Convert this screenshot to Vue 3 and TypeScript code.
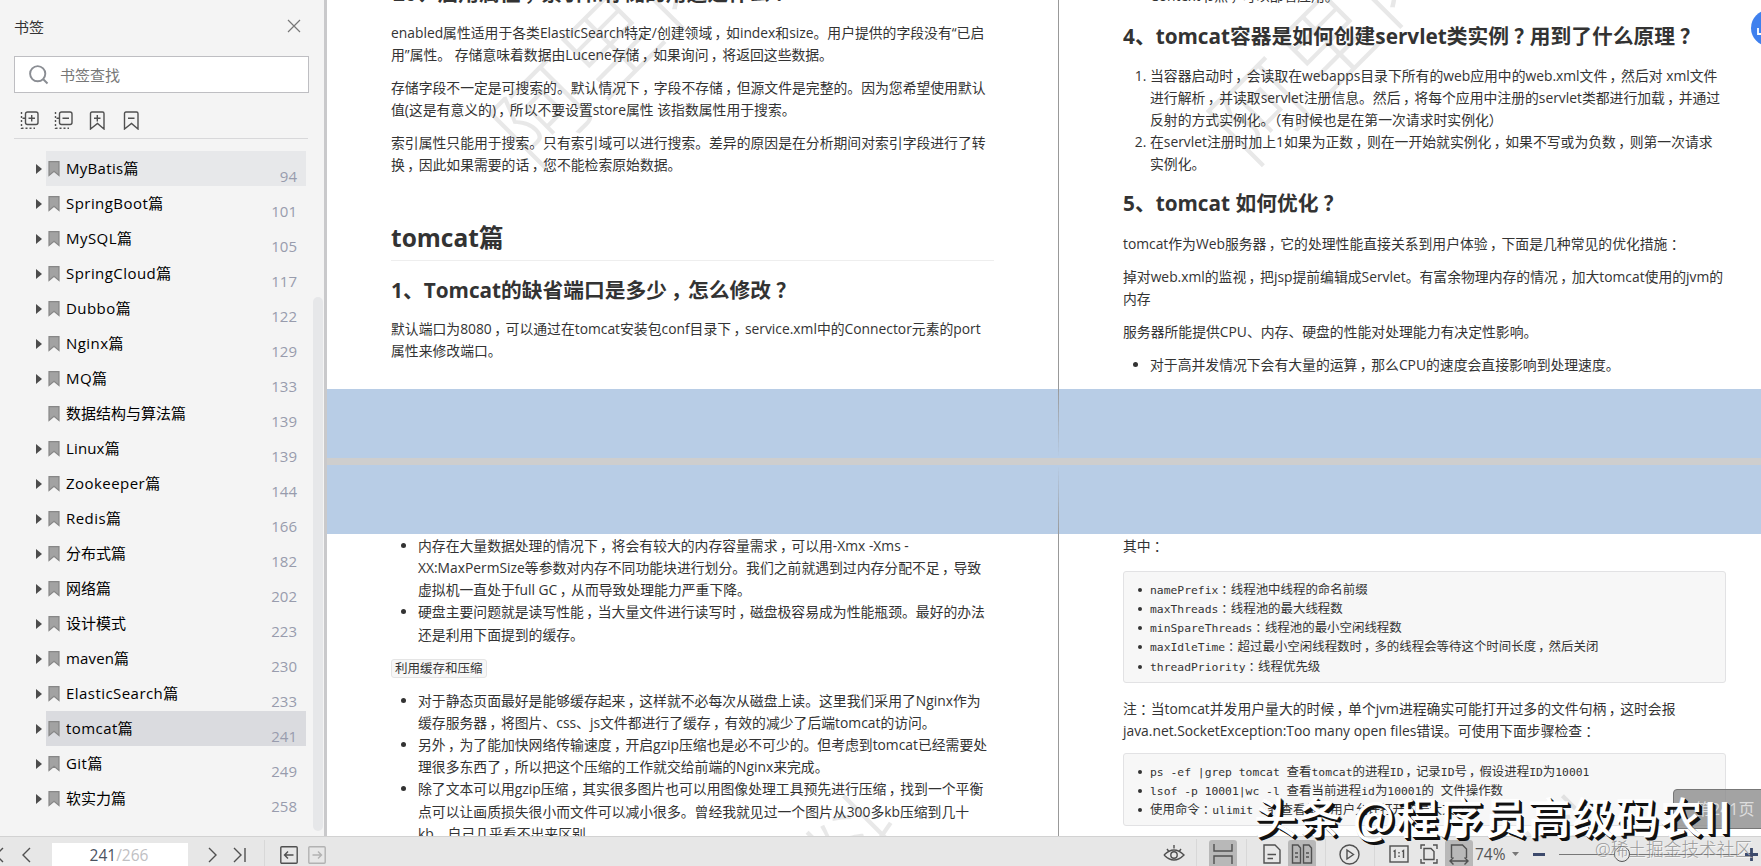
<script setup lang="ts">
import { h } from 'vue'

interface Bookmark { latin?: string; cjk?: string; page: number; leaf?: boolean; state?: string; tight?: boolean }

const bookmarks: Bookmark[] = [
  { latin: 'MyBatis', cjk: '篇', page: 94, state: 'hover' },
  { latin: 'SpringBoot', cjk: '篇', page: 101 },
  { latin: 'MySQL', cjk: '篇', page: 105 },
  { latin: 'SpringCloud', cjk: '篇', page: 117 },
  { latin: 'Dubbo', cjk: '篇', page: 122 },
  { latin: 'Nginx', cjk: '篇', page: 129 },
  { latin: 'MQ', cjk: '篇', page: 133 },
  { cjk: '数据结构与算法篇', page: 139, leaf: true },
  { latin: 'Linux', cjk: '篇', page: 139, tight: true },
  { latin: 'Zookeeper', cjk: '篇', page: 144 },
  { latin: 'Redis', cjk: '篇', page: 166 },
  { cjk: '分布式篇', page: 182 },
  { cjk: '网络篇', page: 202 },
  { cjk: '设计模式', page: 223 },
  { latin: 'maven', cjk: '篇', page: 230, tight: true },
  { latin: 'ElasticSearch', cjk: '篇', page: 233 },
  { latin: 'tomcat', cjk: '篇', page: 241, state: 'active' },
  { latin: 'Git', cjk: '篇', page: 249 },
  { cjk: '软实力篇', page: 258 },
]

const elasticParas: string[][] = [
  ['enabled属性适用于各类ElasticSearch特定/创建领域，如index和size。用户提供的字段没有“已启', '用”属性。 存储意味着数据由Lucene存储，如果询问，将返回这些数据。'],
  ['存储字段不一定是可搜索的。默认情况下，字段不存储，但源文件是完整的。因为您希望使用默认', '值(这是有意义的)，所以不要设置store属性 该指数属性用于搜索。'],
  ['索引属性只能用于搜索。只有索引域可以进行搜索。差异的原因是在分析期间对索引字段进行了转', '换，因此如果需要的话，您不能检索原始数据。'],
]

const portPara: string[] = ['默认端口为8080，可以通过在tomcat安装包conf目录下，service.xml中的Connector元素的port', '属性来修改端口。']

const tuningParas: string[][] = [
  ['tomcat作为Web服务器，它的处理性能直接关系到用户体验，下面是几种常见的优化措施：'],
  ['掉对web.xml的监视，把jsp提前编辑成Servlet。有富余物理内存的情况，加大tomcat使用的jvm的', '内存'],
  ['服务器所能提供CPU、内存、硬盘的性能对处理能力有决定性影响。'],
]

const filesPara: string[] = ['注：当tomcat并发用户量大的时候，单个jvm进程确实可能打开过多的文件句柄，这时会报', 'java.net.SocketException:Too many open files错误。可使用下面步骤检查：']

const cacheList: string[][] = [
  ['对于静态页面最好是能够缓存起来，这样就不必每次从磁盘上读。这里我们采用了Nginx作为', '缓存服务器，将图片、css、js文件都进行了缓存，有效的减少了后端tomcat的访问。'],
  ['另外，为了能加快网络传输速度，开启gzip压缩也是必不可少的。但考虑到tomcat已经需要处', '理很多东西了，所以把这个压缩的工作就交给前端的Nginx来完成。'],
  ['除了文本可以用gzip压缩，其实很多图片也可以用图像处理工具预先进行压缩，找到一个平衡', '点可以让画质损失很小而文件可以减小很多。曾经我就见过一个图片从300多kb压缩到几十', 'kb，自己几乎看不出来区别。'],
]

const hardwareList: string[][] = [
  ['内存在大量数据处理的情况下，将会有较大的内存容量需求，可以用-Xmx -Xms -', 'XX:MaxPermSize等参数对内存不同功能块进行划分。我们之前就遇到过内存分配不足，导致', '虚拟机一直处于full GC，从而导致处理能力严重下降。'],
  ['硬盘主要问题就是读写性能，当大量文件进行读写时，磁盘极容易成为性能瓶颈。最好的办法', '还是利用下面提到的缓存。'],
]

const servletList: string[][] = [
  ['当容器启动时，会读取在webapps目录下所有的web应用中的web.xml文件，然后对 xml文件', '进行解析，并读取servlet注册信息。然后，将每个应用中注册的servlet类都进行加载，并通过', '反射的方式实例化。（有时候也是在第一次请求时实例化）'],
  ['在servlet注册时加上1如果为正数，则在一开始就实例化，如果不写或为负数，则第一次请求', '实例化。'],
]

const poolCode: string[] = [
  'namePrefix：线程池中线程的命名前缀',
  'maxThreads：线程池的最大线程数',
  'minSpareThreads：线程池的最小空闲线程数',
  'maxIdleTime：超过最小空闲线程数时，多的线程会等待这个时间长度，然后关闭',
  'threadPriority：线程优先级',
]

const shellCode: string[] = [
  'ps -ef |grep tomcat 查看tomcat的进程ID，记录ID号，假设进程ID为10001',
  'lsof -p 10001|wc -l 查看当前进程id为10001的 文件操作数',
  '使用命令：ulimit -a 查看每个用户允许打开的最大文件数',
]

// Full-width punctuation sits in the middle of its cell; Latin runs may get a monospace face.
function inline(text: string, mono: boolean) {
  const parts = text.match(/[，：？]|[\x20-\x7e]+|[^\x20-\x7e，：？]+/g) ?? []
  return parts.map((p) => {
    if (/[，：？]/.test(p)) return h('span', { class: p === '，' ? 'pc' : 'pc-q' }, p)
    if (mono && /^[\x20-\x7e]/.test(p)) return h('span', { class: 'mono' }, p)
    return p
  })
}
const Line = (props: { text: string; mono?: boolean }) => h('div', inline(props.text, !!props.mono))
Line.props = ['text', 'mono']
</script>

<template>
  <div class="app">
    <div class="main">
      <aside class="sidebar">
        <header class="side-head">
          <span>书签</span>
          <svg width="14" height="14" viewBox="0 0 14 14"><path d="M1 1L13 13M13 1L1 13" /></svg>
        </header>
        <div class="search">
          <svg width="20" height="20" viewBox="0 0 20 20"><circle cx="8.7" cy="8.7" r="7.6" /><path d="M14 14L18.5 18.5" /></svg>
          <span>书签查找</span>
        </div>
        <div class="tools">
          <svg width="19" height="19" viewBox="0 0 19 19"><rect x="5.5" y="1" width="12.5" height="12.5" rx="2" /><path d="M8.5 7.3H15M11.7 4V10.5M2.5 7.3H5.5" /><path d="M1.5 1V18M1.5 17.3H15" stroke-dasharray="2 2" /></svg>
          <svg width="19" height="19" viewBox="0 0 19 19"><rect x="5.5" y="1" width="12.5" height="12.5" rx="2" /><path d="M8.5 7.3H15M2.5 7.3H5.5" /><path d="M1.5 1V18M1.5 17.3H15" stroke-dasharray="2 2" /></svg>
          <svg width="19" height="19" viewBox="0 0 19 19"><path d="M4 1H14.500Q16 1 16 2.500V18L9.500 12.500L2.500 18V2.500Q2.500 1 4 1M6 7.300H12.500M9.300 4V10.500" /></svg>
          <svg width="19" height="19" viewBox="0 0 19 19"><path d="M4 1H14.500Q16 1 16 2.500V18L9.500 12.500L2.500 18V2.500Q2.500 1 4 1M6 7.300H12.500" /></svg>
        </div>
        <ul class="tree">
          <li v-for="b in bookmarks" :key="b.page + (b.latin ?? '')">
            <span class="twist"><svg v-if="!b.leaf" width="6" height="10" viewBox="0 0 6 10"><path d="M0 0L6 5L0 10Z" /></svg></span>
            <div class="row" :class="b.state">
              <svg class="mark" width="12" height="16" viewBox="0 0 12 16"><path d="M1 .7H11V14.500L6 10.300L1 14.500Z" /></svg>
              <span class="name"><span v-if="b.latin" :class="b.tight ? 'snug' : 'wide'">{{ b.latin }}</span>{{ b.cjk }}</span>
              <span class="num">{{ b.page }}</span>
            </div>
          </li>
        </ul>
        <div class="scrollbar"></div>
      </aside>

      <section class="viewer">
        <div class="spread upper">
          <article class="page">
            <div class="watermark wm-a">阿里内</div>
            <h2 class="cut"><Line text="20、启用属性，索引和存储的用途是什么？" /></h2>
            <div v-for="(p, i) in elasticParas" :key="i" class="para"><Line v-for="l in p" :key="l" :text="l" /></div>
            <h1>tomcat篇</h1>
            <h2><Line text="1、Tomcat的缺省端口是多少，怎么修改？" /></h2>
            <div class="para"><Line v-for="l in portPara" :key="l" :text="l" /></div>
          </article>
          <article class="page right">
            <div class="watermark wm-b">阿里内</div>
            <div class="para cut-line"><Line text="Context节点，可以部署应用。" /></div>
            <h2><Line text="4、tomcat容器是如何创建servlet类实例？用到了什么原理？" /></h2>
            <ol>
              <li v-for="(item, i) in servletList" :key="i"><Line v-for="l in item" :key="l" :text="l" /></li>
            </ol>
            <h2 class="h5"><Line text="5、tomcat 如何优化？" /></h2>
            <div v-for="(p, i) in tuningParas" :key="i" class="para"><Line v-for="l in p" :key="l" :text="l" /></div>
            <ul><li><Line text="对于高并发情况下会有大量的运算，那么CPU的速度会直接影响到处理速度。" /></li></ul>
          </article>
        </div>
        <div class="spread lower">
          <article class="page">
            <div class="watermark wm-c">料</div>
            <ul class="loose">
              <li v-for="(item, i) in hardwareList" :key="i"><Line v-for="l in item" :key="l" :text="l" /></li>
            </ul>
            <div class="tag-line"><code>利用缓存和压缩</code></div>
            <ul class="loose">
              <li v-for="(item, i) in cacheList" :key="i"><Line v-for="l in item" :key="l" :text="l" /></li>
            </ul>
          </article>
          <article class="page right">
            <div class="para"><Line text="其中：" /></div>
            <div class="code first">
              <div v-for="c in poolCode" :key="c" class="code-line"><Line :text="c" :mono="true" /></div>
            </div>
            <div class="para"><Line v-for="l in filesPara" :key="l" :text="l" /></div>
            <div class="code">
              <div v-for="c in shellCode" :key="c" class="code-line"><Line :text="c" :mono="true" /></div>
            </div>
            <div class="watermark wm-d">料</div>
          </article>
        </div>
        <div class="bubble"><svg width="10" height="14" viewBox="0 0 10 14"><path d="M1 4V10H8" /></svg></div>
        <div class="page-tip">第241页</div>
      </section>
    </div>

    <footer class="bar">
      <div class="nav">
        <svg class="n0" width="12" height="18" viewBox="0 0 12 18"><path d="M9 2L2 9L9 16" /></svg>
        <svg class="n1" width="12" height="18" viewBox="0 0 12 18"><path d="M9 2L2 9L9 16" /></svg>
        <div class="pager"><b>241</b><span>/266</span></div>
        <svg class="n2" width="12" height="18" viewBox="0 0 12 18"><path d="M2 2L9 9L2 16" /></svg>
        <svg class="n3" width="14" height="18" viewBox="0 0 14 18"><path d="M1 2L8 9L1 16M12 2V16" /></svg>
        <i class="sep n4"></i>
        <svg class="n5" width="18" height="18" viewBox="0 0 18 18"><rect x=".8" y=".8" width="16.400" height="16.400" rx="1" /><path d="M13.500 9H4.500M8 5.500L4.500 9L8 12.500" /></svg>
        <svg class="n6" width="18" height="18" viewBox="0 0 18 18"><rect x=".8" y=".8" width="16.400" height="16.400" rx="1" /><path d="M4.500 9H13.500M10 5.500L13.500 9L10 12.500" /></svg>
      </div>
      <div class="modes">
        <svg class="eye" width="22" height="20" viewBox="0 0 22 20"><path d="M1 11Q11 1 21 11Q11 21 1 11M4 5L5.500 7M11 1V4.500M18 5L16.500 7" /><circle cx="11" cy="11" r="3.200" /></svg>
        <i class="sep"></i>
        <div class="btn"><svg width="24" height="22" viewBox="0 0 24 22"><path d="M3 1V8H21V1M3 21V13H21V21" /></svg></div>
        <i class="sep"></i>
        <svg class="doc" width="18" height="20" viewBox="0 0 18 20"><path d="M1 1H12L17 6V19H1ZM4.500 10.500H13M4.500 14.500H10" /></svg>
        <div class="btn"><svg width="22" height="20" viewBox="0 0 22 20"><path d="M1.500 1H7L9.500 4V19H1.500ZM12.500 1H18L20.500 4V19H12.500ZM4 9H7M4 13H7M15 9H18M15 13H18" /></svg></div>
        <i class="sep"></i>
        <svg class="play" width="21" height="21" viewBox="0 0 21 21"><circle cx="10.500" cy="10.500" r="9.500" /><path d="M8 6V15L14.500 10.500Z" /></svg>
        <i class="sep"></i>
        <svg class="ratio" width="20" height="18" viewBox="0 0 20 18"><rect x="1" y="1" width="18" height="16" /><path d="M4.500 6.500L6 5.500V13M13 6.500L14.500 5.500V13M10 7V8.500M10 10.500V12" /></svg>
        <svg class="fit" width="18" height="20" viewBox="0 0 18 20"><path d="M1 5V1H5M13 1H17V5M17 15V19H13M5 19H1V15M4 4.500H11L14 7.500V15.500H4Z" /></svg>
        <div class="btn"><svg width="20" height="22" viewBox="0 0 20 22"><path d="M2.500 15V2H13.500L17.500 6V15M1 18H19M4.500 14.500L1 18L4.500 21.500M15.500 14.500L19 18L15.500 21.500" /></svg></div>
        <span class="zoom">74%</span>
        <svg class="caret" width="7" height="4" viewBox="0 0 7 4"><path d="M0 0H7L3.500 4Z" /></svg>
        <i class="minus"></i>
        <div class="slider"><i></i></div>
        <svg class="plus" width="13" height="13" viewBox="0 0 13 13"><path d="M6.500 0V13M0 6.500H13" /></svg>
      </div>
    </footer>
    <div class="stamp">头条 @程序员高级码农II</div>
    <div class="community">@稀土掘金技术社区</div>
  </div>
</template>

<style>
html, body { overflow: hidden; }
.pc { padding-left: .17em; margin-right: -.17em; }
.pc-q { padding-left: .23em; margin-right: -.23em; }
.mono { font-family: "DejaVu Sans Mono", monospace; font-size: 11.350px; white-space: pre; }
</style>

<style scoped>
* { box-sizing: border-box; }
.app { position: relative; width: 1761px; height: 866px; overflow: hidden; background: #f4f4f4; font-family: "Open Sans", "Noto Sans CJK SC", sans-serif; color: #333; display: flex; flex-direction: column; }
svg { fill: none; stroke: #505050; stroke-width: 1.400; flex: none; display: block; }
ul, ol, h1, h2 { margin: 0; padding: 0; }
.main { display: flex; height: 836px; flex: none; }
.sidebar { position: relative; width: 327px; flex: none; padding: 0 18px 0 14px; border-right: 3px solid #c9c9cb; background: #f4f4f4; overflow: hidden; }
.side-head { height: 56px; padding: 0 5px 4px 0; display: flex; align-items: center; justify-content: space-between; font-size: 15px; }
.side-head svg { stroke: #777; stroke-width: 1.200; }
.search { height: 37px; width: 295px; border: 1px solid #bebec2; background: #fff; display: flex; align-items: center; padding-left: 14px; gap: 11px; font-size: 15px; color: #777; }
.search svg { stroke: #8a8d93; stroke-width: 1.900; }
.tools { width: 294px; height: 46px; border-bottom: 1px solid #d8d8da; display: flex; gap: 15px; padding: 18px 0 0 6px; }
.tree { list-style: none; padding-top: 12px; }
.tree li { display: flex; height: 35px; align-items: center; }
.twist { width: 32px; padding-left: 22px; flex: none; }
.twist svg { fill: #4c4c4c; stroke: none; }
.row { width: 260px; height: 35px; display: flex; align-items: center; padding: 0 9px 2px 2px; font-size: 15px; color: #000; }
.row.hover { background: #e7e8ea; }
.row.active { background: #dadbdf; }
.mark { fill: #a2a2a2; stroke: #878787; stroke-width: 1.200; margin-top: 2px; }
.name { margin-left: 6px; white-space: nowrap; }
.wide { letter-spacing: .45px; }
.snug { letter-spacing: .15px; }
.row.hover .wide { letter-spacing: .3px; }
.num { margin-left: auto; color: #989cad; padding-top: 16px; }
.scrollbar { position: absolute; left: 313px; top: 297px; width: 10px; height: 534px; border-radius: 5px; background: #e6e7e9; }
.viewer { position: relative; flex: 1; overflow: hidden; background: #cecece; }
.spread { display: flex; }
.upper { height: 458px; margin-bottom: 7px; }
.lower { height: 371px; }
.page { position: relative; width: 731px; flex: none; padding-left: 64px; background: #fff; overflow: hidden; font-size: 13.830px; line-height: 22px; white-space: nowrap; }
.page.right { width: 704px; border-left: 1px solid #999; }
.upper .page { border-bottom: 69px solid #b8cde6; }
.lower .page { border-top: 69px solid #b8cde6; padding-top: 1px; }
.page > :not(.watermark) { position: relative; }
.para { margin-bottom: 11px; }
h1 { width: 603px; margin-top: 44px; height: 41px; line-height: 36px; font-size: 24.500px; border-bottom: 1px solid #eee; }
h2 { font-size: 20.750px; line-height: 28px; margin: 15px 0 14.500px; }
h2.cut { margin-top: -21px; margin-left: 2px; }
.cut-line { margin: -15px 0 13px 27px; }
h2.h5 { margin-top: 14px; margin-bottom: 16.500px; }
.page ol { padding-left: 27px; }
.page ul { padding-left: 27px; }
.page ol li { list-style: decimal; }
.loose { line-height: 22.150px; }
.tag-line { margin: 11px 0; }
.tag-line code { font: inherit; font-size: 12.500px; line-height: 17px; display: inline-block; padding: 0 3px; border: 1px solid #e5e5e5; border-radius: 3px; background: #f7f7f7; }
.code { width: 603px; border: 1px solid #e2e2e4; border-radius: 3px; background: #f7f7f7; padding: 8px 0 6px 26px; font-size: 12.450px; line-height: 19.300px; margin-bottom: 15px; }
.code.first { margin-top: 13.500px; height: 112px; }
.code-line { position: relative; height: 19.300px; }
.code-line::before { content: ""; position: absolute; left: -12px; top: 8px; width: 4px; height: 4px; border-radius: 50%; background: #333; }
.watermark { position: absolute; font-size: 92px; line-height: 100px; letter-spacing: 5px; font-weight: 300; color: rgba(120, 120, 120, .17); transform: rotate(-45deg); transform-origin: 50px 50px; }
.wm-a { left: 167px; top: 60px; }
.wm-b { left: 153px; top: 58px; }
.wm-c { left: 479px; top: 258px; }
.page .wm-d { left: 466px; top: 258px; }
.bubble { position: absolute; left: 1424px; top: 10px; width: 36px; height: 36px; border-radius: 50%; background: #3f80ee; padding: 14px 0 0 6px; }
.bubble svg { stroke: #fff; stroke-width: 1.800; }
.page-tip { position: absolute; right: -6px; top: 789px; width: 94px; height: 40px; border: 1px solid #777; border-radius: 4px; background: rgba(140, 140, 140, .8); color: #ddd; font-size: 16px; line-height: 38px; padding-left: 21px; }
.bar { height: 30px; flex: none; background: #e7e7e7; border-top: 1px solid #d2d2d2; display: flex; justify-content: space-between; overflow: hidden; }
.nav { display: flex; align-items: center; padding-top: 6px; }
.n0 { margin-left: -6px; }
.n1 { margin-left: 15px; }
.pager { width: 136px; height: 24px; margin: 0 19px 0 19px; padding-right: 2px; background: #fff; text-align: center; font-size: 15.500px; line-height: 24px; }
.pager b { font-weight: 400; color: #4b5260; }
.pager span { color: #c0c0c3; }
.n3 { margin-left: 14px; }
.sep { width: 1px; height: 30px; background: #d8d8d8; flex: none; }
.n4 { margin: 0 15px 0 17px; }
.n6 { margin-left: 10px; stroke: #b2b2b2; }
.modes { width: 598px; display: flex; align-items: center; padding-top: 5px; position: relative; }
.btn { width: 28px; height: 28px; background: #b8b8b8; border-radius: 3px; display: flex; align-items: center; justify-content: center; flex: none; }
.eye { margin: 0 11px 0 0; }
.eye + .sep { margin-right: 12px; }
.btn + .sep { margin-left: 9px; }
.doc { margin: 0 7px 0 16px; }
.play { margin: 0 14px 0 13px; }
.ratio { margin-left: 14px; }
.fit { margin: 0 7px 0 11px; }
.zoom { font-size: 15.500px; color: #555; margin-left: 2px; width: 36px; }
.caret { fill: #777; stroke: none; margin-left: 1px; }
.minus { width: 12px; height: 3px; background: #3d4a6c; margin-left: 14px; flex: none; }
.slider { width: 180px; height: 1px; background: #777; margin-left: 14px; flex: none; position: relative; }
.slider i { position: absolute; left: 55px; top: -8px; width: 16px; height: 16px; border: 1.500px solid #555; border-radius: 50%; background: #e7e7e7; }
.plus { stroke: #3d4a6c; stroke-width: 2.800; margin-left: 6px; }
.stamp { position: absolute; left: 1254px; top: 785px; font-size: 43px; line-height: 60px; color: #fff; font-weight: 500; letter-spacing: 1px; text-shadow: 1px 1px 0 #111, 2px 2px 0 #111, 3px 3px 0 #111; white-space: nowrap; font-family: "Noto Sans CJK SC", sans-serif; }
.community { position: absolute; left: 1595px; top: 836px; font-size: 17.700px; line-height: 26px; color: rgba(130, 130, 130, .8); text-shadow: 1px 1px 0 rgba(255, 255, 255, .6); white-space: nowrap; font-weight: 300; }
</style>
